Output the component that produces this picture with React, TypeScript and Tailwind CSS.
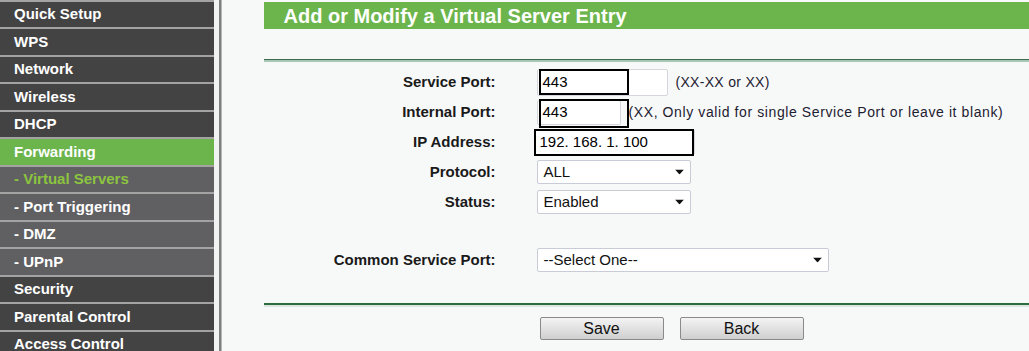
import React from 'react';

const menu: { label: string; kind: 'top' | 'active' | 'sub' | 'subActive' }[] = [
  { label: 'Quick Setup', kind: 'top' },
  { label: 'WPS', kind: 'top' },
  { label: 'Network', kind: 'top' },
  { label: 'Wireless', kind: 'top' },
  { label: 'DHCP', kind: 'top' },
  { label: 'Forwarding', kind: 'active' },
  { label: '- Virtual Servers', kind: 'subActive' },
  { label: '- Port Triggering', kind: 'sub' },
  { label: '- DMZ', kind: 'sub' },
  { label: '- UPnP', kind: 'sub' },
  { label: 'Security', kind: 'top' },
  { label: 'Parental Control', kind: 'top' },
  { label: 'Access Control', kind: 'top' },
];

const itemClass = {
  top: 'bg-[#434344] text-white',
  active: 'bg-[#6cb44c] text-white',
  sub: 'bg-[#606063] text-white',
  subActive: 'bg-[#606063] text-[#8cc43f]',
};

const Arrow = () => (
  <svg width="9" height="5" viewBox="0 0 9 5" className="absolute right-[6px] top-1/2 -translate-y-1/2">
    <path d="M0 0h9L4.5 5z" fill="#111" />
  </svg>
);

const Select: React.FC<{ value: string; width: string }> = ({ value, width }) => (
  <div className={`relative h-[24px] ${width} bg-white border border-[#c9ccd6] rounded-[2px] flex items-center pl-[6px] text-[15px] text-[#111]`}>
    {value}
    <Arrow />
  </div>
);

const Label: React.FC<{ children: React.ReactNode }> = ({ children }) => (
  <div className="w-[232px] text-right font-bold text-[15px] text-[#1a1a1a]">{children}</div>
);

export default function App() {
  return (
    <div className="w-[1029px] h-[351px] overflow-hidden flex font-['Liberation_Sans',Arial,sans-serif] bg-[#f7f9f9]">
      {/* sidebar */}
      <div className="w-[214px] shrink-0 bg-[#a3a3a3] flex flex-col gap-[2px] pt-[1.5px]">
        {menu.map((m) => (
          <div
            key={m.label}
            className={`h-[25.5px] shrink-0 flex items-center pl-[14px] text-[15px] font-bold ${itemClass[m.kind]}`}
          >
            {m.label}
          </div>
        ))}
      </div>
      <div className="w-[5px] shrink-0 bg-[#f1f2f2]" />
      <div className="w-[1.5px] shrink-0 bg-[#7f7f7f]" />
      <div className="w-[1px] shrink-0 bg-[#b5b5b5]" />

      {/* content */}
      <div className="flex-1 pl-[42px] pt-[2px] flex flex-col">
        <div className="h-[27px] bg-[#6cb44c] flex items-center pl-[20px] text-white font-bold text-[20px] leading-none">
          Add or Modify a Virtual Server Entry
        </div>
        <div className="mt-[30px] h-[1px] bg-[#3c6d4b]" />
        <div className="h-[2px] bg-[#a9c7b8]" />

        <div className="mt-[5px] flex flex-col">
          <div className="h-[30px] flex items-center gap-[41px]">
            <Label>Service Port:</Label>
            <div className="flex items-center">
              <div className="relative w-[131px] h-[27px] bg-white border border-[#d4d6dc] rounded-[2px] flex items-center pl-[5px] text-[15px]">
                443
                <div className="absolute left-[1px] top-[-1px] w-[90px] h-[26px] border-2 border-black" />
              </div>
              <span className="ml-[8px] text-[14px] tracking-[0.3px] text-[#1e2030]">(XX-XX or XX)</span>
            </div>
          </div>

          <div className="h-[30px] flex items-center gap-[41px]">
            <Label>Internal Port:</Label>
            <div className="flex items-center">
              <div className="relative w-[84px] h-[25px] bg-white border border-[#d4d6dc] rounded-[2px] flex items-center pl-[5px] text-[15px]">
                443
                <div className="absolute left-[1px] top-[-2px] w-[90px] h-[29px] border-2 border-black" />
              </div>
              <span className="ml-[8px] text-[14px] tracking-[0.6px] text-[#1e2030]">
                (XX, Only valid for single Service Port or leave it blank)
              </span>
            </div>
          </div>

          <div className="h-[30px] flex items-center gap-[41px]">
            <Label>IP Address:</Label>
            <div className="relative w-[161px] h-[26px] bg-white border border-[#d4d6dc] rounded-[2px] flex items-center pl-[5px] text-[15px] -ml-[3px]">
              192. 168. 1. 100
              <div className="absolute left-[-1px] top-[-1px] w-[160px] h-[27px] border-2 border-black" />
            </div>
          </div>

          <div className="h-[30px] flex items-center gap-[41px]">
            <Label>Protocol:</Label>
            <Select value="ALL" width="w-[154px]" />
          </div>

          <div className="h-[30px] flex items-center gap-[41px]">
            <Label>Status:</Label>
            <Select value="Enabled" width="w-[154px]" />
          </div>

          <div className="mt-[28px] h-[30px] flex items-center gap-[41px]">
            <Label>Common Service Port:</Label>
            <Select value="--Select One--" width="w-[292px]" />
          </div>
        </div>

        <div className="mt-[28px] h-[2px] bg-[#2f6b3d]" />
        <div className="h-[2px] bg-[#dde7e1]" />

        <div className="mt-[10px] flex gap-[16px] pl-[276px]">
          <button className="w-[124px] h-[23px] rounded-[2px] border border-[#8a8a8a] bg-gradient-to-b from-[#f4f4f4] to-[#cfcfcf] text-[16px] text-[#111] leading-none">
            Save
          </button>
          <button className="w-[124px] h-[23px] rounded-[2px] border border-[#8a8a8a] bg-gradient-to-b from-[#f4f4f4] to-[#cfcfcf] text-[16px] text-[#111] leading-none">
            Back
          </button>
        </div>
      </div>
    </div>
  );
}
